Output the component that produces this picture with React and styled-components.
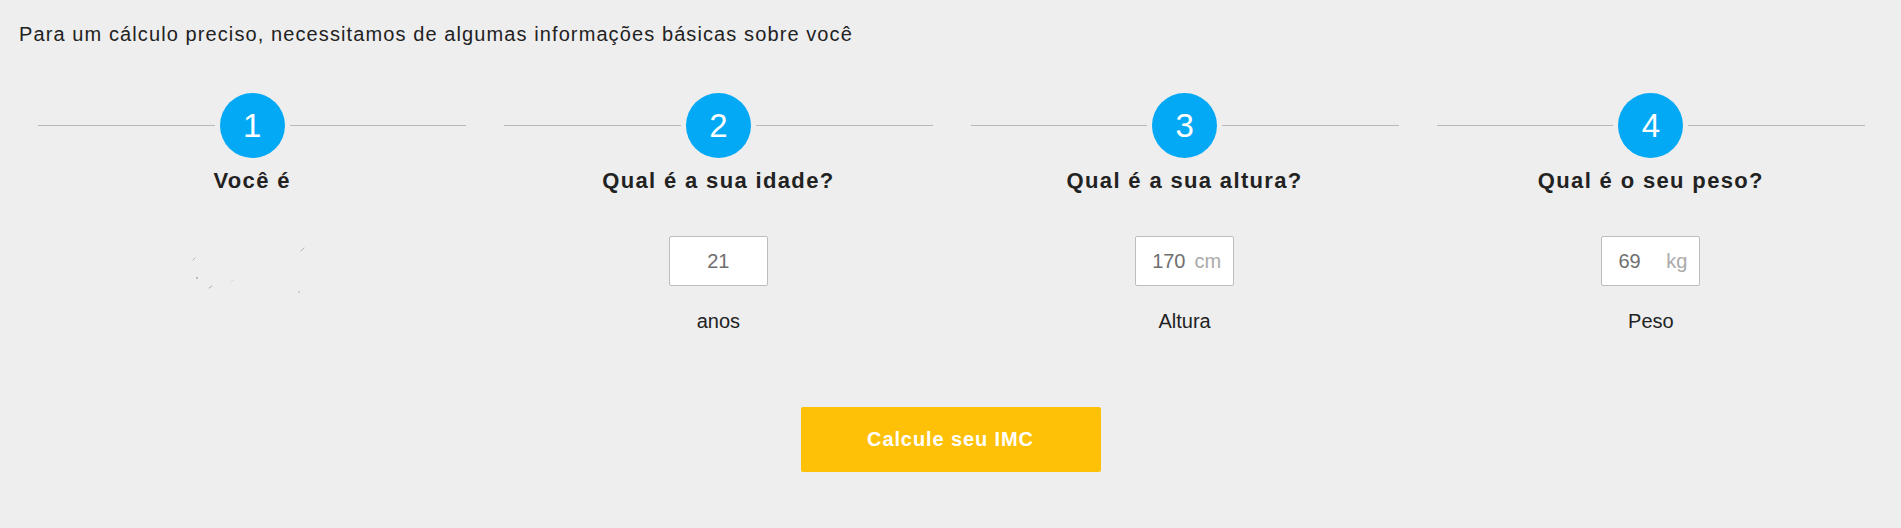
import React from "react";
import styled, { createGlobalStyle } from "styled-components";

const GlobalStyle = createGlobalStyle`
  html, body {
    margin: 0;
    padding: 0;
    background: #eeeeee;
  }
  body {
    font-family: "Liberation Sans", Arial, sans-serif;
    color: #222222;
  }
`;

const Page = styled.div`
  min-height: 528px;
  padding: 22px 19px 0 19px;
  box-sizing: border-box;
`;

const Intro = styled.p`
  margin: 0;
  font-size: 20px;
  line-height: 24px;
  letter-spacing: 1.1px;
  color: #222;
`;

const Steps = styled.div`
  display: grid;
  grid-template-columns: repeat(4, 1fr);
  column-gap: 38px;
  margin: 47px 17px 0 19px;
  align-items: start;
`;

const Step = styled.div`
  display: flex;
  flex-direction: column;
  align-items: center;
`;

const StepHeader = styled.div`
  display: flex;
  align-items: center;
  gap: 5px;
  width: 100%;
`;

const Line = styled.span`
  flex: 1;
  height: 1px;
  background: #b9b9b9;
`;

const Circle = styled.div`
  width: 65px;
  height: 65px;
  border-radius: 50%;
  background: #03a9f4;
  color: #fff;
  font-size: 33px;
  display: flex;
  align-items: center;
  justify-content: center;
  flex: none;
`;

const Title = styled.h3`
  margin: 10px 0 0;
  font-size: 22px;
  line-height: 26px;
  font-weight: 700;
  letter-spacing: 1.35px;
  color: #222;
`;

const Field = styled.div`
  position: relative;
  margin-top: 42px;
  width: 99px;
  height: 50px;
  box-sizing: border-box;
  background: #fff;
  border: 1px solid #bdbdbd;
  border-radius: 2px;
  display: flex;
  align-items: center;
  justify-content: ${(p) => (p.$unit ? "flex-start" : "center")};
  padding-left: ${(p) => (p.$unit ? "16px" : "0")};
`;

const Value = styled.span`
  font-size: 20px;
  color: #6f6f6f;
`;

const Unit = styled.span`
  position: absolute;
  right: 12px;
  top: 50%;
  transform: translateY(-50%);
  font-size: 20px;
  color: #aaa;
`;

const Caption = styled.div`
  margin-top: 23px;
  font-size: 20px;
  line-height: 24px;
  color: #222;
`;

const Marks = styled.svg`
  margin-top: 52px;
  display: block;
`;

const Actions = styled.div`
  display: flex;
  justify-content: center;
  margin-top: 74px;
`;

const Button = styled.button`
  width: 300px;
  height: 65px;
  border: none;
  border-radius: 2px;
  background: #ffc107;
  color: #fff;
  font-family: "Liberation Sans", Arial, sans-serif;
  font-size: 20px;
  font-weight: 700;
  letter-spacing: 0.9px;
  cursor: pointer;
`;

const steps = [
  { n: 1, title: "Você é" },
  { n: 2, title: "Qual é a sua idade?", value: "21", caption: "anos" },
  { n: 3, title: "Qual é a sua altura?", value: "170", unit: "cm", caption: "Altura" },
  { n: 4, title: "Qual é o seu peso?", value: "69", unit: "kg", caption: "Peso" },
];

function BrokenMarks() {
  return (
    <Marks width="130" height="50" viewBox="0 0 130 50">
      <g stroke="#9a9a9a" strokeWidth="1" strokeLinecap="round" opacity="0.7">
        <line x1="6" y1="14" x2="8" y2="12" />
        <line x1="114" y1="5" x2="117" y2="2" />
        <line x1="22" y1="42" x2="25" y2="40" />
        <line x1="44" y1="36" x2="46" y2="34" opacity="0.4" />
        <circle cx="10" cy="32" r="0.5" />
        <circle cx="112" cy="46" r="0.5" opacity="0.5" />
      </g>
    </Marks>
  );
}

export default function App() {
  return (
    <>
      <GlobalStyle />
      <Page>
        <Intro>Para um cálculo preciso, necessitamos de algumas informações básicas sobre você</Intro>
        <Steps>
          {steps.map((s) => (
            <Step key={s.n}>
              <StepHeader>
                <Line />
                <Circle>{s.n}</Circle>
                <Line />
              </StepHeader>
              <Title>{s.title}</Title>
              {s.value ? (
                <>
                  <Field $unit={!!s.unit}>
                    <Value>{s.value}</Value>
                    {s.unit && <Unit>{s.unit}</Unit>}
                  </Field>
                  <Caption>{s.caption}</Caption>
                </>
              ) : (
                <BrokenMarks />
              )}
            </Step>
          ))}
        </Steps>
        <Actions>
          <Button type="button">Calcule seu IMC</Button>
        </Actions>
      </Page>
    </>
  );
}
